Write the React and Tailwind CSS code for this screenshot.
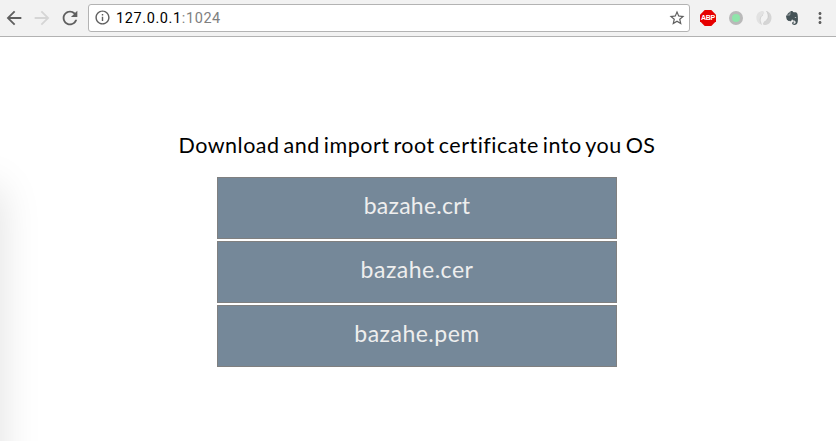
import { MdArrowBack, MdArrowForward, MdRefresh, MdInfoOutline, MdStarBorder, MdMoreVert } from "react-icons/md";
import { SiEvernote } from "react-icons/si";

const files = [
  { name: "bazahe.crt", spacing: "tracking-[0.25px]" },
  { name: "bazahe.cer", spacing: "tracking-[0.5px]" },
  { name: "bazahe.pem", spacing: "tracking-[0.5px]" },
];

function Toolbar() {
  return (
    <header className="flex h-[37px] shrink-0 items-center border-b border-[#b2b2b2] bg-[#f2f2f2] pl-[3px] text-[#5f5f5f]">
      <MdArrowBack className="size-[22px]" />
      <MdArrowForward className="ml-[6px] size-[22px] text-[#d5d5d5]" />
      <MdRefresh className="ml-[6px] size-[22px]" />
      <div className="mb-px ml-[7px] flex h-7 w-[602px] items-center rounded-[3px] border border-[#b3b3b3] bg-white pl-[5px] pr-[3px]">
        <MdInfoOutline className="size-[17px]" />
        <span className="ml-[5px] pt-[2px] font-['Roboto',sans-serif] text-[14.5px] leading-5 tracking-[0.6px] text-black">
          127.0.0.1<span className="text-[#808080]">:1024</span>
        </span>
        <MdStarBorder className="ml-auto size-[18px]" />
      </div>
      <div className="relative ml-[10px] h-4 w-4">
        <svg className="size-4" viewBox="0 0 16 16">
          <path d="M4.7 0h6.6L16 4.7v6.6L11.3 16H4.7L0 11.3V4.7z" fill="#e60000" />
        </svg>
        <span className="absolute top-0 left-0 w-4 text-center font-['Liberation_Sans',sans-serif] text-[7px] leading-4 font-bold tracking-[-0.3px] text-white">ABP</span>
      </div>
      <span className="ml-[13px] size-[14px] rounded-full border-[3px] border-[#b9b9b9] bg-[#8fe5aa]" />
      <svg className="ml-[13px] size-4" viewBox="0 0 16 16" fill="none">
        <path d="M7 1C3 1 0 4 .4 8.4.7 12 3.5 14 5.5 14.5 3.6 11.5 2.6 7.5 7 4.8 8.6 3.8 8.7 2 7 1z" fill="#e2e2e2" />
        <path d="M10.5 1c3 .8 5.2 3.5 5 7.2-.3 4-3 6.8-6.8 6.8-2.1 0-2.3-2.1-.5-3 4.2-2 5-5.8 2.3-11z" fill="#d5d5d5" />
        <path d="M7 4.8C3.5 7 3.7 11 5.5 14.5M10.5 1c3.2 4.5 1.8 9-2.3 11" stroke="#c8c8c8" strokeWidth=".8" />
      </svg>
      <SiEvernote className="ml-[13px] size-[14px] text-[#455357]" />
      <MdMoreVert className="ml-[12px] size-[18px]" />
    </header>
  );
}

export default function App() {
  return (
    <div className="relative flex h-[441px] w-[836px] flex-col overflow-hidden bg-white">
      <Toolbar />
      <div className="pointer-events-none absolute top-[188px] -left-[40px] h-[300px] w-[40px] shadow-[0_0_42px_rgba(0,0,0,0.13)]" />
      <main className="flex flex-col items-center pr-[2px] pt-[92px] font-['Lato',sans-serif]">
        <h1 className="h-[48px] whitespace-nowrap text-[21.5px] leading-[32px] tracking-[0.5px] [word-spacing:-2px] text-black">
          Download and import root certificate into you OS
        </h1>
        <div className="flex w-[400px] flex-col gap-[2px]">
          {files.map((f) => (
            <a key={f.name} className={`flex h-[62px] items-center justify-center border border-[#808080] bg-[#758899] pb-[5px] text-[23px] text-[#eeeeee] ${f.spacing}`}>
              {f.name}
            </a>
          ))}
        </div>
      </main>
    </div>
  );
}
